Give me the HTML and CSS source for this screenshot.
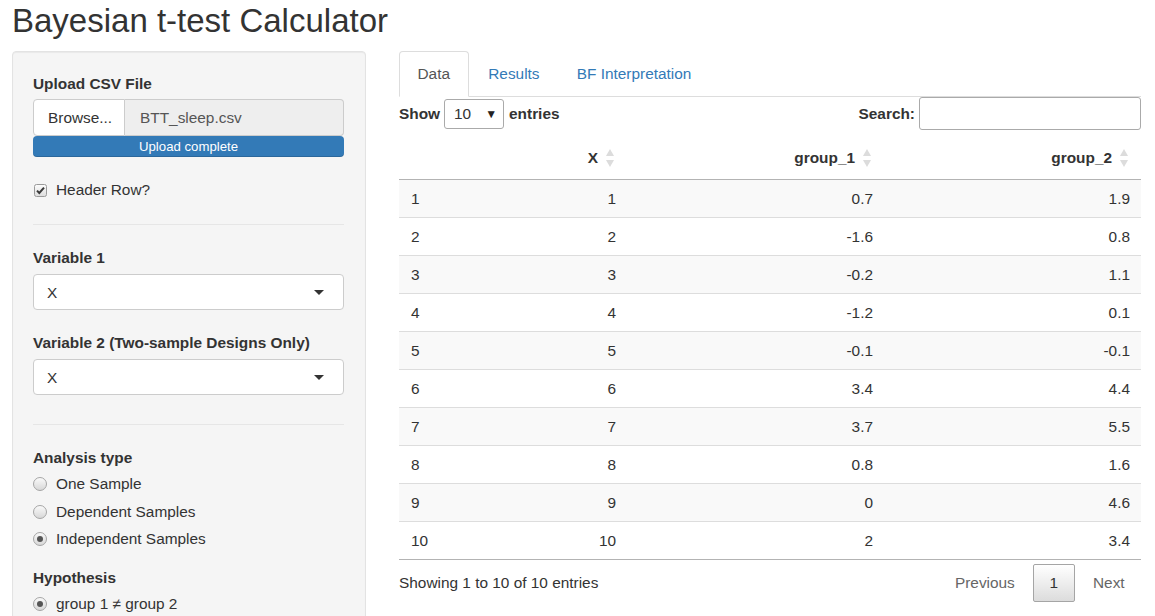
FILE: index.html
```html
<!DOCTYPE html>
<html>
<head>
<meta charset="utf-8">
<title>Bayesian t-test Calculator</title>
<link rel="stylesheet" href="styles.css">
</head>
<body>
<div class="page">
  <h1 class="title">Bayesian t-test Calculator</h1>
  <div class="layout">
    <aside class="well">
      <label class="field-label lbl-upload">Upload CSV File</label>
      <div class="file-group">
        <span class="browse-btn">Browse...</span>
        <span class="file-name">BTT_sleep.csv</span>
      </div>
      <div class="progress">Upload complete</div>

      <div class="check-row check-header">
        <svg class="box" width="13" height="13" viewBox="0 0 13 13"><defs><linearGradient id="cg" x1="0" y1="0" x2="0" y2="1"><stop offset="0" stop-color="#fdfdfd"/><stop offset="1" stop-color="#dcdcdc"/></linearGradient></defs><rect x="0.5" y="0.5" width="12" height="12" rx="2" fill="url(#cg)" stroke="#9a9a9a"/><path d="M3 6.6 L5.3 9 L10 3.6" fill="none" stroke="#3a3a3a" stroke-width="2"/></svg>
        <span>Header Row?</span>
      </div>

      <hr class="sep sep-1">

      <label class="field-label">Variable 1</label>
      <div class="select-box"><span>X</span><i class="caret"></i></div>

      <label class="field-label lbl-var2">Variable 2 (Two-sample Designs Only)</label>
      <div class="select-box"><span>X</span><i class="caret"></i></div>

      <hr class="sep sep-2">

      <label class="field-label">Analysis type</label>
      <div class="radio-list">
        <div class="check-row"><svg class="radio" width="14" height="14" viewBox="0 0 14 14"><defs><linearGradient id="rg" x1="0" y1="0" x2="0" y2="1"><stop offset="0" stop-color="#fbfbfb"/><stop offset="1" stop-color="#d6d6d6"/></linearGradient></defs><circle cx="7" cy="7" r="6.5" fill="url(#rg)" stroke="#a5a5a5"/></svg><span>One Sample</span></div>
        <div class="check-row"><svg class="radio" width="14" height="14" viewBox="0 0 14 14"><circle cx="7" cy="7" r="6.5" fill="url(#rg)" stroke="#a5a5a5"/></svg><span>Dependent Samples</span></div>
        <div class="check-row"><svg class="radio" width="14" height="14" viewBox="0 0 14 14"><circle cx="7" cy="7" r="6.5" fill="url(#rg)" stroke="#a5a5a5"/><circle cx="7" cy="7" r="3" fill="#555"/></svg><span>Independent Samples</span></div>
      </div>

      <label class="field-label lbl-hyp">Hypothesis</label>
      <div class="radio-list">
        <div class="check-row"><svg class="radio" width="14" height="14" viewBox="0 0 14 14"><circle cx="7" cy="7" r="6.5" fill="url(#rg)" stroke="#a5a5a5"/><circle cx="7" cy="7" r="3" fill="#555"/></svg><span>group 1 ≠ group 2</span></div>
      </div>
    </aside>

    <main class="main">
      <ul class="tabs">
        <li class="tab active">Data</li>
        <li class="tab">Results</li>
        <li class="tab">BF Interpretation</li>
      </ul>

      <div class="dt-controls">
        <div class="dt-length">
          <span>Show</span>
          <span class="len-select"><span>10</span><span class="len-arrow">▼</span></span>
          <span>entries</span>
        </div>
        <div class="dt-search">
          <span>Search:</span>
          <span class="search-input"></span>
        </div>
      </div>

      <table class="dt">
        <colgroup>
          <col class="c-idx"><col class="c-x"><col class="c-g"><col class="c-g">
        </colgroup>
        <thead>
          <tr>
            <th class="left"></th>
            <th class="sort">X<svg class="sort-ic" width="8" height="18" viewBox="0 0 8 18"><polygon points="0,7 4,0 8,7" /><polygon points="0,11 4,18 8,11"/></svg></th>
            <th class="sort">group_1<svg class="sort-ic" width="8" height="18" viewBox="0 0 8 18"><polygon points="0,7 4,0 8,7" /><polygon points="0,11 4,18 8,11"/></svg></th>
            <th class="sort">group_2<svg class="sort-ic" width="8" height="18" viewBox="0 0 8 18"><polygon points="0,7 4,0 8,7" /><polygon points="0,11 4,18 8,11"/></svg></th>
          </tr>
        </thead>
        <tbody>
          <tr><td class="left">1</td><td>1</td><td>0.7</td><td>1.9</td></tr>
          <tr><td class="left">2</td><td>2</td><td>-1.6</td><td>0.8</td></tr>
          <tr><td class="left">3</td><td>3</td><td>-0.2</td><td>1.1</td></tr>
          <tr><td class="left">4</td><td>4</td><td>-1.2</td><td>0.1</td></tr>
          <tr><td class="left">5</td><td>5</td><td>-0.1</td><td>-0.1</td></tr>
          <tr><td class="left">6</td><td>6</td><td>3.4</td><td>4.4</td></tr>
          <tr><td class="left">7</td><td>7</td><td>3.7</td><td>5.5</td></tr>
          <tr><td class="left">8</td><td>8</td><td>0.8</td><td>1.6</td></tr>
          <tr><td class="left">9</td><td>9</td><td>0</td><td>4.6</td></tr>
          <tr><td class="left">10</td><td>10</td><td>2</td><td>3.4</td></tr>
        </tbody>
      </table>

      <div class="dt-footer">
        <div class="dt-info">Showing 1 to 10 of 10 entries</div>
        <div class="dt-paginate">
          <span class="pg disabled">Previous</span>
          <span class="pg current">1</span>
          <span class="pg disabled">Next</span>
        </div>
      </div>
    </main>
  </div>
</div>
</body>
</html>
```

FILE: styles.css
```css
html, body {
  margin: 0;
  padding: 0;
  overflow: hidden;
  background: #fff;
}
body {
  font-family: "Liberation Sans", Arial, sans-serif;
  font-size: 15.4px;
  line-height: 22px;
  color: #333;
}
.page {
  padding: 0 14px 0 12px;
}
.title {
  margin: 3px 0 12px;
  font-size: 33px;
  line-height: 36.3px;
  font-weight: 500;
  letter-spacing: 0;
}
.layout {
  display: flex;
  gap: 33px;
  align-items: flex-start;
}

/* sidebar */
.well {
  width: 354px;
  flex: none;
  box-sizing: border-box;
  background: #f5f5f5;
  border: 1px solid #e3e3e3;
  border-radius: 4px;
  box-shadow: inset 0 1px 1px rgba(0,0,0,.05);
  padding: 21px 21px 40px 20px;
  display: flex;
  flex-direction: column;
}
.field-label {
  display: block;
  font-weight: bold;
  margin-bottom: 5px;
}
.lbl-upload { margin-bottom: 4px; }
.file-group {
  display: flex;
  height: 37px;
  box-sizing: border-box;
}
.browse-btn {
  width: 92px;
  box-sizing: border-box;
  background: #fff;
  border: 1px solid #ccc;
  border-radius: 4px 0 0 4px;
  padding: 7px 0 0 14px;
  color: #333;
}
.file-name {
  flex: 1;
  background: #eee;
  border: 1px solid #ccc;
  border-left: none;
  border-radius: 0 4px 4px 0;
  padding: 7px 0 0 15px;
  color: #555;
}
.progress {
  height: 21px;
  line-height: 21px;
  background: #337ab7;
  color: #fff;
  font-size: 13.2px;
  text-align: center;
  border-radius: 4px;
  box-shadow: inset 0 -1px 0 rgba(0,0,0,.15);
}
.check-row {
  display: flex;
  align-items: center;
  height: 22px;
}
.check-row svg {
  flex: none;
  margin-right: 9px;
}
.check-row .box { margin-left: 1px; margin-right: 9px; }
.check-header {
  margin-top: 22px;
}
.sep {
  border: 0;
  border-top: 1px solid #e6e6e6;
  margin: 22px 0 22px;
  height: 0;
}
.sep-1 { margin-top: 23px; }
.sep-2 { margin-top: 29px; }
.select-box {
  height: 36px;
  box-sizing: border-box;
  background: #fff;
  border: 1px solid #ccc;
  border-radius: 4px;
  display: flex;
  align-items: center;
  justify-content: space-between;
  padding: 1px 19px 0 13px;
  color: #333;
}
.caret {
  width: 0;
  height: 0;
  border-left: 5px solid transparent;
  border-right: 5px solid transparent;
  border-top: 5px solid #333;
}
.lbl-var2 { margin-top: 22px; }
.radio-list {
  display: flex;
  flex-direction: column;
  gap: 5.5px;
  margin-top: -1px;
}
.lbl-hyp { margin-top: 17px; }

/* main */
.main {
  width: 742px;
  flex: none;
}
.tabs {
  list-style: none;
  margin: 0;
  padding: 0;
  display: flex;
  border-bottom: 1px solid #ddd;
}
.tab {
  padding: 11px 16.5px;
  border: 1px solid transparent;
  border-radius: 4px 4px 0 0;
  margin-right: 2.2px;
  margin-bottom: -1px;
  color: #337ab7;
  line-height: 22px;
}
.tab.active {
  color: #555;
  background: #fff;
  border-color: #ddd;
  border-bottom-color: transparent;
  padding-left: 17.5px;
  padding-right: 17.5px;
}
.dt-controls {
  display: flex;
  justify-content: space-between;
  align-items: center;
  height: 33px;
}
.dt-length, .dt-search {
  display: flex;
  align-items: center;
  font-weight: bold;
}
.len-select {
  display: inline-flex;
  align-items: center;
  justify-content: space-between;
  width: 60px;
  height: 30px;
  box-sizing: border-box;
  margin: 1px 5px 0 4px;
  border: 1px solid #aaa;
  border-radius: 3px;
  padding: 0 6px 0 9px;
  font-weight: normal;
  background: #fff;
}
.len-arrow {
  font-size: 12px;
  color: #222;
}
.search-input {
  display: inline-block;
  width: 222px;
  height: 33px;
  box-sizing: border-box;
  margin-left: 4px;
  border: 1px solid #aaa;
  border-radius: 3px;
  background: #fff;
}
.dt {
  width: 742px;
  border-collapse: collapse;
  table-layout: fixed;
  margin-top: 6px;
  border-bottom: 1px solid #b3b3b3;
}
.c-idx { width: 100px; }
.c-x { width: 128px; }
.c-g { width: 257px; }
.dt th {
  position: relative;
  text-align: right;
  font-weight: bold;
  padding: 11px 29px 10px 11px;
  line-height: 22px;
  border-bottom: 1px solid #b3b3b3;
}
.dt th.left { text-align: left; }
.sort-ic {
  position: absolute;
  right: 13px;
  top: 13px;
  fill: #dcdcdc;
}
.dt td {
  text-align: right;
  padding: 7.5px 11px;
  line-height: 22px;
  border-top: 1px solid #ddd;
}
.dt td.left {
  text-align: left;
  padding-left: 12px;
}
.dt tbody tr:first-child td { border-top: none; }
.dt tbody tr:nth-child(odd) { background: #f9f9f9; }
.dt-footer {
  display: flex;
  justify-content: space-between;
  align-items: flex-start;
}
.dt-info {
  padding-top: 12px;
}
.dt-paginate {
  display: flex;
  padding-top: 4px;
}
.pg {
  padding: 7px 15.4px;
  border: 1px solid transparent;
  border-radius: 2px;
  margin-left: 2px;
  line-height: 22px;
}
.pg.disabled { color: #666; }
.pg.current {
  color: #333;
  border-color: #a5a5a5;
  background: linear-gradient(to bottom, #fff 0%, #dcdcdc 100%);
}
```
